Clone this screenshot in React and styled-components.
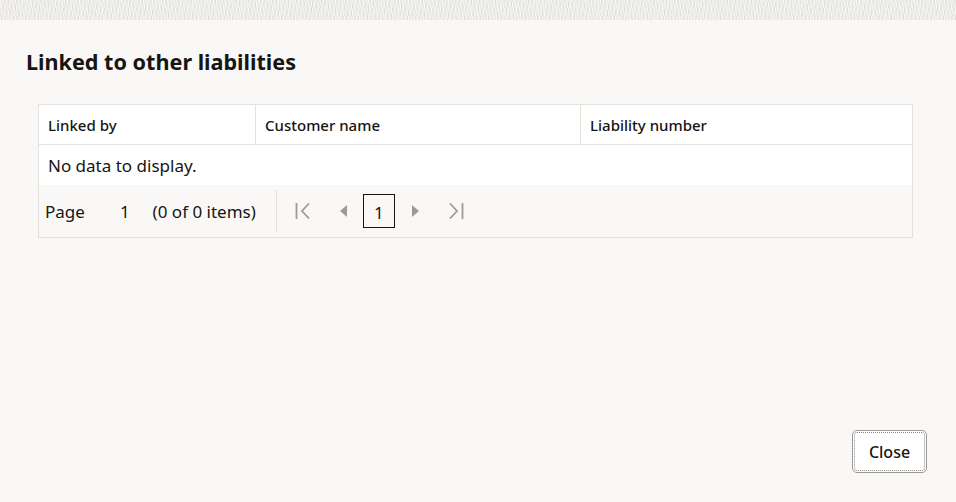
import styled, { createGlobalStyle } from 'styled-components'

const GlobalStyle = createGlobalStyle`
	html, body {
		margin: 0;
		padding: 0;
		background: #f9f8f6;
	}

	body {
		font-family: 'Noto Sans', 'Open Sans', sans-serif;
		color: #161513;
	}
`

const Page = styled.div`
	width: 956px;
	height: 502px;
	display: flex;
	flex-direction: column;
	overflow: hidden;
`

const TexturedStrip = styled.div`
	height: 20px;
	flex-shrink: 0;
	background-color: #ecebe9;
	background-image:
		repeating-linear-gradient(80deg, rgba(255, 255, 255, 0.55) 0 1px, transparent 1px 3px),
		repeating-linear-gradient(100deg, rgba(210, 208, 205, 0.45) 0 1px, transparent 1px 4px);
`

const Dialog = styled.div`
	flex: 1;
	display: flex;
	flex-direction: column;
	padding: 27px 29px 29px 26px;
`

const Title = styled.h1`
	margin: 0;
	font-size: 21.6px;
	font-weight: 700;
	line-height: 30px;
`

const Table = styled.div`
	margin: 27px 14px 0 12px;
	border: 1px solid #e4e2df;
	background: #fff;
`

const Row = styled.div`
	display: grid;
	grid-template-columns: 216px 325px 1fr;
	height: 39px;
	border-bottom: 1px solid #e4e2df;
`

const HeaderCell = styled.div`
	display: flex;
	align-items: center;
	padding-left: 9px;
	font-size: 15px;
	font-weight: 500;
	border-left: ${(props) => (props.first ? 'none' : '1px solid #e4e2df')};
`

const EmptyRow = styled.div`
	height: 40px;
	display: flex;
	align-items: center;
	padding-left: 9px;
	font-size: 17px;
`

const Pager = styled.div`
	height: 52px;
	display: flex;
	align-items: center;
	background: #f9f8f6;
	padding-left: 6px;
	font-size: 17px;
`

const PagerLabel = styled.span`
	margin-right: ${(props) => props.gap}px;
`

const Divider = styled.div`
	width: 1px;
	height: 42px;
	background: #e4e2df;
	margin: 0 18px 0 20px;
`

const NavButton = styled.button`
	border: none;
	background: none;
	padding: 0;
	margin-right: ${(props) => props.gap || 0}px;
	display: flex;
	align-items: center;
	justify-content: center;
	color: #9e9b97;
`

const PageBox = styled.div`
	width: 32px;
	height: 34px;
	box-sizing: border-box;
	border: 1px solid #161513;
	display: flex;
	align-items: center;
	justify-content: center;
	padding-top: 3px;
	font-size: 17px;
	margin-right: 17px;
`

const Footer = styled.div`
	margin-top: auto;
	display: flex;
	justify-content: flex-end;
`

const CloseButton = styled.button`
	width: 75px;
	height: 43px;
	box-sizing: border-box;
	border: 1px solid #9a9794;
	outline: 1px dotted #8a8784;
	outline-offset: -3px;
	border-radius: 5px;
	background: #fff;
	font-family: inherit;
	font-size: 16px;
	font-weight: 500;
	color: #161513;
`

const FirstIcon = () => (
	<svg width="15" height="18" viewBox="0 0 15 18" fill="none" stroke="currentColor" strokeWidth="1.8">
		<path d="M1.5 1v16" />
		<path d="M14 1.5 7 9l7 7.5" />
	</svg>
)

const LastIcon = () => (
	<svg width="15" height="18" viewBox="0 0 15 18" fill="none" stroke="currentColor" strokeWidth="1.8">
		<path d="M13.5 1v16" />
		<path d="M1 1.5 8 9l-7 7.5" />
	</svg>
)

const PrevIcon = () => (
	<svg width="7" height="12" viewBox="0 0 7 12" fill="currentColor">
		<path d="M7 0v12L0 6z" />
	</svg>
)

const NextIcon = () => (
	<svg width="7" height="12" viewBox="0 0 7 12" fill="currentColor">
		<path d="M0 0v12l7-6z" />
	</svg>
)

export default function App() {
	return (
		<Page>
			<GlobalStyle />
			<TexturedStrip />
			<Dialog>
				<Title>Linked to other liabilities</Title>
				<Table>
					<Row>
						<HeaderCell first>Linked by</HeaderCell>
						<HeaderCell>Customer name</HeaderCell>
						<HeaderCell>Liability number</HeaderCell>
					</Row>
					<EmptyRow>No data to display.</EmptyRow>
					<Pager>
						<PagerLabel gap={35}>Page</PagerLabel>
						<PagerLabel gap={23}>1</PagerLabel>
						<PagerLabel gap={0}>(0 of 0 items)</PagerLabel>
						<Divider />
						<NavButton gap={30}>
							<FirstIcon />
						</NavButton>
						<NavButton gap={16}>
							<PrevIcon />
						</NavButton>
						<PageBox>1</PageBox>
						<NavButton gap={30}>
							<NextIcon />
						</NavButton>
						<NavButton>
							<LastIcon />
						</NavButton>
					</Pager>
				</Table>
				<Footer>
					<CloseButton>Close</CloseButton>
				</Footer>
			</Dialog>
		</Page>
	)
}
